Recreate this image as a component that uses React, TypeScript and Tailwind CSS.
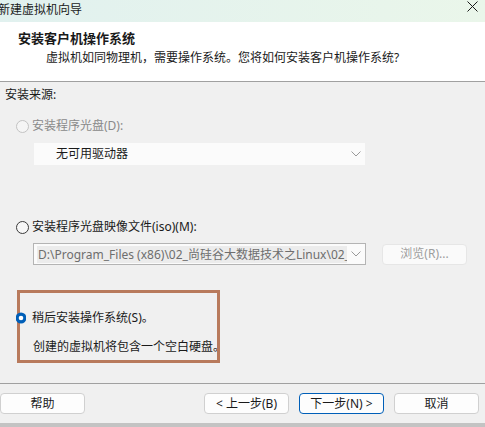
import React from "react";

const font = { fontFamily: '"Noto Sans", "Noto Sans CJK SC", sans-serif' };

function Chevron() {
  return (
    <svg width="10" height="6" viewBox="0 0 10 6" className="shrink-0">
      <path d="M0.5 0.5 L5 5 L9.5 0.5" fill="none" stroke="#9a9a9a" strokeWidth="1" />
    </svg>
  );
}

function Radio({ disabled }: { disabled?: boolean }) {
  return (
    <svg width="13" height="13" viewBox="0 0 13 13" className="shrink-0">
      <circle cx="6.5" cy="6.5" r="6" fill={disabled ? "#f5f5f5" : "#f7f7f7"} stroke={disabled ? "#c2c2c2" : "#3a3a3a"} strokeWidth="1" />
    </svg>
  );
}

function Btn({ children, primary, disabled, className }: { children: React.ReactNode; primary?: boolean; disabled?: boolean; className?: string }) {
  return (
    <div
      className={
        "h-[21px] w-[85px] rounded-[4px] flex items-center justify-center text-[12px] " +
        (primary ? "border border-[#005fb8] bg-[#fdfdfd] " : disabled ? "border border-[#e6e6e6] bg-[#fafafa] text-[#9d9d9d] " : "border border-[#d0d0d0] bg-[#fdfdfd] text-[#1a1a1a] ") +
        (className || "")
      }
    >
      {children}
    </div>
  );
}

export default function App() {
  return (
    <div className="w-[485px] h-[427px] flex flex-col bg-[#f0f0f0] text-[#1a1a1a] overflow-hidden relative" style={font}>
      {/* title bar */}
      <div className="h-[22px] shrink-0 flex items-start justify-between bg-gradient-to-r from-[#e1f1ef] to-[#eaf6ea]">
        <span className="text-[12px] leading-[16px] ml-[-2px] mt-[2px] text-[#1a1a1a]">新建虚拟机向导</span>
        <svg width="11" height="11" viewBox="0 0 11 11" className="mr-[7px] mt-[1px]">
          <path d="M0.5 0.5 L10.5 10.5 M10.5 0.5 L0.5 10.5" stroke="#1a1a1a" strokeWidth="1" />
        </svg>
      </div>
      {/* header */}
      <div className="h-[59px] shrink-0 bg-white flex flex-col">
        <div className="ml-[18px] mt-[8px] text-[13px] leading-[17px] font-bold">安装客户机操作系统</div>
        <div className="ml-[46px] mt-[3px] text-[12px] leading-[16px]">虚拟机如同物理机，需要操作系统。您将如何安装客户机操作系统?</div>
      </div>
      <div className="h-px shrink-0 bg-[#a0a0a0]" />
      {/* body */}
      <div className="flex-1 flex flex-col pt-[5px] text-[12px] leading-[16px] relative">
        <div className="ml-[5px] h-4">安装来源:</div>

        <div className="mt-[15px] ml-[16px] h-4 flex items-center gap-[3px] text-[#8a8a8a]">
          <Radio disabled />
          <span>安装程序光盘(D):</span>
        </div>

        <div className="mt-[9px] ml-[34px] w-[331px] h-[22px] bg-[#fbfbfb] flex items-center justify-between pl-[22px] pr-[4px]">
          <span>无可用驱动器</span>
          <Chevron />
        </div>

        <div className="mt-[54px] ml-[16px] h-4 flex items-center gap-[3px]">
          <Radio />
          <span>安装程序光盘映像文件(iso)(M):</span>
        </div>

        <div className="mt-[8px] ml-[33px] flex items-center gap-[16px]">
          <div className="w-[333px] h-[22px] border border-[#b4b4b4] bg-[#fbfbfb] flex items-center justify-between pr-[4px] pl-[3px]">
            <span className="h-[17px] bg-[#ececec] text-[#6e6e6e] whitespace-nowrap overflow-hidden w-[310px] pl-[1px] leading-[17px]">
              D:\Program_Files (x86)\02_尚硅谷大数据技术之Linux\02_虚拟机
            </span>
            <Chevron />
          </div>
          <Btn disabled>浏览(R)...</Btn>
        </div>

        <div className="mt-[45px] ml-[16px] h-4 flex items-center gap-[6px]">
          <svg width="10" height="12" viewBox="0 0 10 12" className="shrink-0 relative z-10">
            <circle cx="5" cy="6" r="5.5" fill="#005fb8" />
            <circle cx="5" cy="6" r="2.3" fill="#ffffff" />
          </svg>
          <span>稍后安装操作系统(S)。</span>
        </div>
        <div className="mt-[13px] ml-[33px] h-4">创建的虚拟机将包含一个空白硬盘。</div>

        {/* annotation rectangle */}
        <div className="absolute left-[17px] top-[208px] w-[203px] h-[73px] border-[3px] border-[#b87a5c]" />
      </div>
      <div className="h-px shrink-0 bg-[#a0a0a0]" />
      {/* footer */}
      <div className="h-[39px] shrink-0 flex items-start pt-[9px]">
        <Btn className="w-[84px]">帮助</Btn>
        <div className="flex-1" />
        <Btn>&lt; 上一步(B)</Btn>
        <Btn primary className="ml-[10px]">下一步(N) &gt;</Btn>
        <Btn className="ml-[10px] mr-[6px]">取消</Btn>
      </div>
      <div className="h-[4px] shrink-0 bg-[#c3c3c3]" />
    </div>
  );
}
